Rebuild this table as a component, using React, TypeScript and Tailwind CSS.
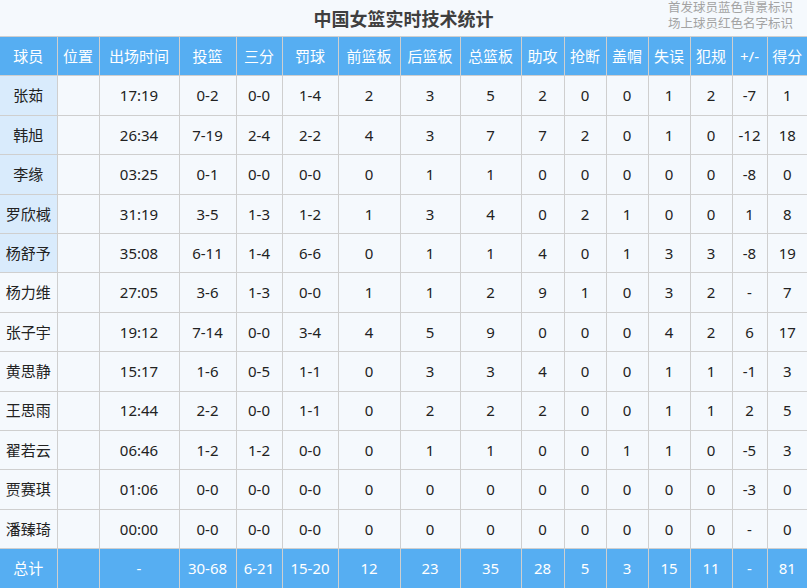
import React from "react";

const headers = ["球员", "位置", "出场时间", "投篮", "三分", "罚球", "前篮板", "后篮板", "总篮板", "助攻", "抢断", "盖帽", "失误", "犯规", "+/-", "得分"];
const widths = [57, 42, 80, 57, 46, 56, 62, 60, 61, 43, 42, 42, 42, 42, 35, 40];

type Row = { name: string; starter?: boolean; cells: string[] };

const rows: Row[] = [
  { name: "张茹", starter: true, cells: ["17:19", "0-2", "0-0", "1-4", "2", "3", "5", "2", "0", "0", "1", "2", "-7", "1"] },
  { name: "韩旭", starter: true, cells: ["26:34", "7-19", "2-4", "2-2", "4", "3", "7", "7", "2", "0", "1", "0", "-12", "18"] },
  { name: "李缘", starter: true, cells: ["03:25", "0-1", "0-0", "0-0", "0", "1", "1", "0", "0", "0", "0", "0", "-8", "0"] },
  { name: "罗欣棫", starter: true, cells: ["31:19", "3-5", "1-3", "1-2", "1", "3", "4", "0", "2", "1", "0", "0", "1", "8"] },
  { name: "杨舒予", starter: true, cells: ["35:08", "6-11", "1-4", "6-6", "0", "1", "1", "4", "0", "1", "3", "3", "-8", "19"] },
  { name: "杨力维", cells: ["27:05", "3-6", "1-3", "0-0", "1", "1", "2", "9", "1", "0", "3", "2", "-", "7"] },
  { name: "张子宇", cells: ["19:12", "7-14", "0-0", "3-4", "4", "5", "9", "0", "0", "0", "4", "2", "6", "17"] },
  { name: "黄思静", cells: ["15:17", "1-6", "0-5", "1-1", "0", "3", "3", "4", "0", "0", "1", "1", "-1", "3"] },
  { name: "王思雨", cells: ["12:44", "2-2", "0-0", "1-1", "0", "2", "2", "2", "0", "0", "1", "1", "2", "5"] },
  { name: "翟若云", cells: ["06:46", "1-2", "1-2", "0-0", "0", "1", "1", "0", "0", "1", "1", "0", "-5", "3"] },
  { name: "贾赛琪", cells: ["01:06", "0-0", "0-0", "0-0", "0", "0", "0", "0", "0", "0", "0", "0", "-3", "0"] },
  { name: "潘臻琦", cells: ["00:00", "0-0", "0-0", "0-0", "0", "0", "0", "0", "0", "0", "0", "0", "-", "0"] },
];

const total = ["-", "30-68", "6-21", "15-20", "12", "23", "35", "28", "5", "3", "15", "11", "-", "81"];

const font = { fontFamily: "'Noto Sans', 'Noto Sans CJK SC', sans-serif" };

export default function App() {
  return (
    <div className="w-[807px] h-[588px] overflow-hidden bg-[#f5f9fd]" style={font}>
      <div className="grid grid-cols-[1fr_auto_1fr] items-center h-[36px]">
        <div />
        <div className="text-[18px] font-bold text-[#3f3f3f] leading-none pt-[1px]">中国女篮实时技术统计</div>
        <div className="self-start justify-self-end pr-[14px] text-[12.5px] leading-[15.5px] text-[#a3a3a3] text-right">
          <div>首发球员蓝色背景标识</div>
          <div>场上球员红色名字标识</div>
        </div>
      </div>
      <table className="table-fixed border-collapse w-[807px] text-[15px]">
        <colgroup>
          {widths.map((w, i) => (
            <col key={i} style={{ width: w }} />
          ))}
        </colgroup>
        <thead>
          <tr className="h-[39.4px] bg-[#56aef2] text-white">
            {headers.map((h, i) => (
              <th
                key={i}
                className={`font-normal text-center p-0 border border-[#cfcfcf] whitespace-nowrap ${i === 0 ? "border-l-0" : ""} ${i === 15 ? "border-r-0" : ""}`}
              >
                {h}
              </th>
            ))}
          </tr>
        </thead>
        <tbody className="text-[#222]">
          {rows.map((r, ri) => (
            <tr key={ri} className="h-[39.4px]">
              <td className={`text-center p-0 border border-[#cfcfcf] border-l-0 whitespace-nowrap ${r.starter ? "bg-[#d9ebfc]" : "bg-[#f5f9fd]"}`}>
                {r.name}
              </td>
              <td className="p-0 border border-[#cfcfcf] bg-[#f5f9fd]" />
              {r.cells.map((c, ci) => (
                <td
                  key={ci}
                  className={`text-center p-0 border border-[#cfcfcf] bg-[#f5f9fd] whitespace-nowrap ${ci === 13 ? "border-r-0" : ""}`}
                >
                  {c}
                </td>
              ))}
            </tr>
          ))}
          <tr className="h-[39.4px] bg-[#56aef2] text-white">
            <td className="text-center p-0 border border-[#cfcfcf] border-l-0 border-b-0">总计</td>
            <td className="p-0 border border-[#cfcfcf] border-b-0" />
            {total.map((c, ci) => (
              <td
                key={ci}
                className={`text-center p-0 border border-[#cfcfcf] border-b-0 whitespace-nowrap ${ci === 13 ? "border-r-0" : ""}`}
              >
                {c}
              </td>
            ))}
          </tr>
        </tbody>
      </table>
    </div>
  );
}
